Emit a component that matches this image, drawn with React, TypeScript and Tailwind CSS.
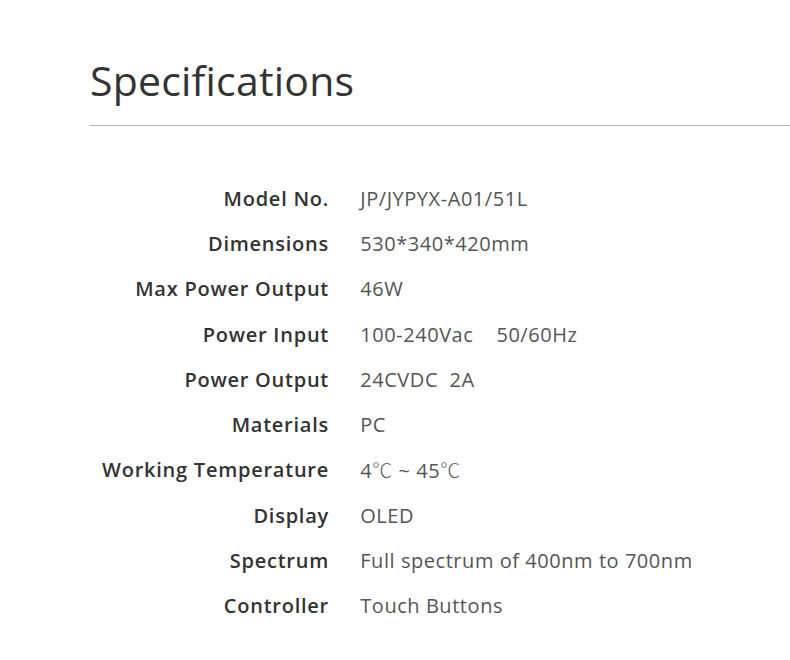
import React from "react";

const deg = (
  <span className="font-light text-[#666]" style={{ fontFamily: '"Noto Sans CJK SC", sans-serif' }}>
    ℃
  </span>
);

const rows: [string, React.ReactNode][] = [
  ["Model No.", "JP/JYPYX-A01/51L"],
  ["Dimensions", "530*340*420mm"],
  ["Max Power Output", "46W"],
  ["Power Input", <span key="pi">100-240Vac&nbsp;&nbsp;&nbsp; 50/60Hz</span>],
  ["Power Output", <span key="po">24CVDC&nbsp; 2A</span>],
  ["Materials", "PC"],
  ["Working Temperature", <span key="wt">4{deg} ~ 45{deg}</span>],
  ["Display", "OLED"],
  ["Spectrum", "Full spectrum of 400nm to 700nm"],
  ["Controller", "Touch Buttons"],
];

export default function App() {
  return (
    <div
      className="w-[790px] h-[660px] bg-white overflow-hidden"
      style={{ fontFamily: '"Open Sans", "Noto Sans", sans-serif' }}
    >
      <div className="pl-[90px] pt-[52px]">
        <h1 className="text-[41px] leading-[56px] tracking-[0.2px] text-[#333] font-normal">Specifications</h1>
        <div className="mt-[17px] h-px bg-[#b5b5b5]" />
      </div>
      <div className="pt-[50px] pl-[90px] flex flex-col">
        {rows.map(([k, v]) => (
          <div key={k} className="flex items-center h-[45.3px]">
            <div className="w-[239px] text-right text-[20px] tracking-[0.75px] font-semibold text-[#333] mr-[-0.75px]">{k}</div>
            <div className="pl-[32px] text-[20px] tracking-[0.55px] text-[#555]">{v}</div>
          </div>
        ))}
      </div>
    </div>
  );
}
